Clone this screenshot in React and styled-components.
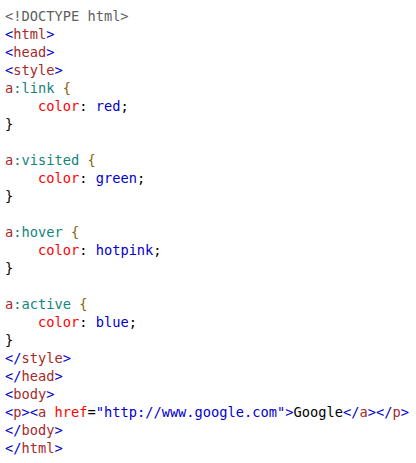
import React from "react";
import styled, { createGlobalStyle } from "styled-components";

const Global = createGlobalStyle`
  html, body { margin: 0; padding: 0; background: #ffffff; }
`;

const Code = styled.div`
  padding: 7px 0 0 5px;
  font-family: "DejaVu Sans Mono", "Liberation Mono", monospace;
  font-size: 13.7px;
  line-height: 18px;
  color: #000000;
  white-space: pre;
`;

const Line = styled.div`
  height: 18px;
`;

const colors = {
  doc: "#5f5f5f",
  br: "#0000cd",
  tag: "#a52a2a",
  attr: "#ff0000",
  val: "#0000cd",
  sel: "#a52a2a",
  pseudo: "#12857a",
  brace: "#8a6410",
  prop: "#ff0000",
  pv: "#0000cd",
  p: "#000000",
};

const Tok = styled.span`
  color: ${(p) => colors[p.$t]};
`;

const Tag = ({ name, close }) => (
  <>
    <Tok $t="br">{close ? "</" : "<"}</Tok>
    <Tok $t="tag">{name}</Tok>
    <Tok $t="br">&gt;</Tok>
  </>
);

const Rule = ({ pseudo, value }) => (
  <>
    <Line>
      <Tok $t="sel">a</Tok>
      <Tok $t="pseudo">:{pseudo}</Tok> <Tok $t="brace">{"{"}</Tok>
    </Line>
    <Line>
      {"    "}
      <Tok $t="prop">color</Tok>
      <Tok $t="p">:</Tok> <Tok $t="pv">{value}</Tok>
      <Tok $t="p">;</Tok>
    </Line>
    <Line>
      <Tok $t="p">{"}"}</Tok>
    </Line>
  </>
);

export default function App() {
  return (
    <>
      <Global />
      <Code>
        <Line>
          <Tok $t="doc">&lt;!DOCTYPE html&gt;</Tok>
        </Line>
        <Line>
          <Tag name="html" />
        </Line>
        <Line>
          <Tag name="head" />
        </Line>
        <Line>
          <Tag name="style" />
        </Line>
        <Rule pseudo="link" value="red" />
        <Line />
        <Rule pseudo="visited" value="green" />
        <Line />
        <Rule pseudo="hover" value="hotpink" />
        <Line />
        <Rule pseudo="active" value="blue" />
        <Line>
          <Tag name="style" close />
        </Line>
        <Line>
          <Tag name="head" close />
        </Line>
        <Line>
          <Tag name="body" />
        </Line>
        <Line>
          <Tag name="p" />
          <Tok $t="br">&lt;</Tok>
          <Tok $t="tag">a</Tok> <Tok $t="attr">href</Tok>
          <Tok $t="p">=</Tok>
          <Tok $t="val">"http://www.google.com"</Tok>
          <Tok $t="br">&gt;</Tok>
          Google
          <Tag name="a" close />
          <Tag name="p" close />
        </Line>
        <Line>
          <Tag name="body" close />
        </Line>
        <Line>
          <Tag name="html" close />
        </Line>
      </Code>
    </>
  );
}
